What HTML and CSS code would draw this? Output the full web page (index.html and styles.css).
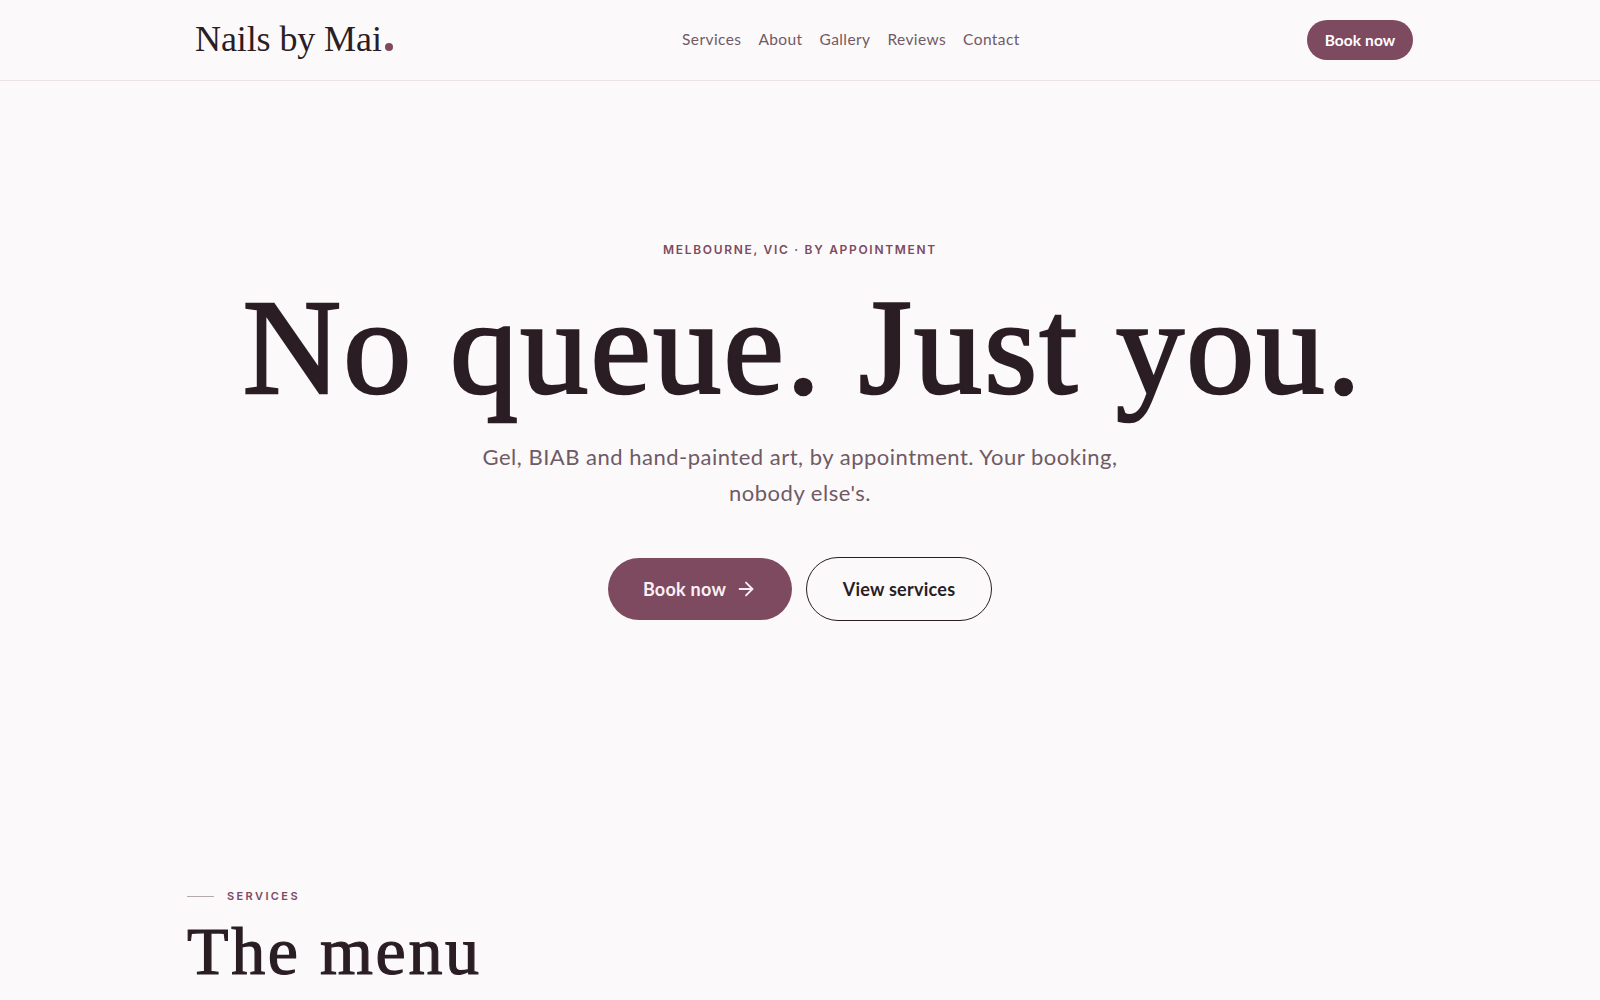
FILE: index.html
```html
<!DOCTYPE html>
<html lang="en">
<head>
<meta charset="utf-8">
<title>Nails by Mai</title>
<link rel="stylesheet" href="styles.css">
</head>
<body>
<header class="site-header">
  <div class="header-inner">
    <a class="logo" href="#">Nails by Mai<span class="logo-dot"></span></a>
    <nav class="nav">
      <a href="#">Services</a>
      <a href="#">About</a>
      <a href="#">Gallery</a>
      <a href="#">Reviews</a>
      <a href="#">Contact</a>
    </nav>
    <a class="btn-small" href="#">Book now</a>
  </div>
</header>
<main>
  <section class="hero">
    <p class="eyebrow">MELBOURNE, VIC · BY APPOINTMENT</p>
    <h1 class="hero-title">No queue. Just you.</h1>
    <p class="hero-sub">Gel, BIAB and hand-painted art, by appointment. Your booking, nobody else's.</p>
    <div class="hero-actions">
      <a class="btn btn-primary" href="#">Book now
        <svg class="arrow" viewBox="0 0 24 24" width="22" height="22" fill="none" stroke="currentColor" stroke-width="2" stroke-linecap="round" stroke-linejoin="round"><path d="M5 12h14"/><path d="m12 5 7 7-7 7"/></svg>
      </a>
      <a class="btn btn-outline" href="#">View services</a>
    </div>
  </section>
  <section class="services">
    <div class="section-label"><span class="rule"></span><span class="label-text">SERVICES</span></div>
    <h2 class="section-title">The menu</h2>
  </section>
</main>
</body>
</html>
```
FILE: styles.css
```css
* { box-sizing: border-box; }
html, body { margin: 0; height: 1000px; overflow: hidden; }
body { background: #fbf9fa; color: #2a1d24; font-family: "Inter", "Liberation Sans", sans-serif; }
a { text-decoration: none; color: inherit; }
.site-header { height: 81px; border-bottom: 1px solid #ebe3e5; }
.header-inner { width: 1226px; height: 80px; margin: 0 auto; display: flex; justify-content: space-between; align-items: center; padding-left: 8px; }
.logo { font-family: "Liberation Serif", serif; font-size: 36px; letter-spacing: -0.1px; display: inline-flex; align-items: baseline; position: relative; top: -1px; }
.logo-dot { width: 8px; height: 8px; border-radius: 50%; background: #7d4a5f; margin-left: 3px; margin-bottom: -3px; }
.nav { display: flex; gap: 17px; font-family: "Lato", sans-serif; font-size: 15.5px; color: #6f5a65; letter-spacing: 0.4px; position: relative; top: -1px; left: 1px; }
.btn-small { height: 40px; width: 106px; border-radius: 20px; background: #7d4a5f; color: #fff; font-family: "Lato", sans-serif; font-size: 15.5px; font-weight: 700; letter-spacing: 0.1px; display: flex; align-items: center; justify-content: center; }
.hero { height: 807px; padding-top: 161px; text-align: center; }
.eyebrow { margin: 0; font-size: 12px; font-weight: 600; letter-spacing: 1.7px; color: #7d4a5f; line-height: 16px; }
.hero-title { margin: 14px 0 0; padding-left: 6px; font-family: "Liberation Serif", serif; font-weight: 400; font-size: 136px; letter-spacing: 2.3px; line-height: 150px; color: #2a1d24; -webkit-text-stroke: 2.6px #2a1d24; }
.hero-sub { width: 660px; margin: 17px auto 0; font-family: "Lato", sans-serif; font-size: 22px; letter-spacing: 0.5px; line-height: 36px; color: #6f5a65; }
.hero-actions { display: flex; justify-content: center; align-items: center; gap: 14px; margin-top: 46px; }
.btn { display: flex; align-items: center; justify-content: center; gap: 9px; border-radius: 32px; font-family: "Lato", sans-serif; font-size: 18px; font-weight: 700; letter-spacing: 0.25px; }
.btn-primary { width: 184px; height: 62px; background: #7d4a5f; color: #fbf0f4; }
.btn-outline { width: 186px; height: 64px; border: 1.5px solid #2a1d24; color: #2a1d24; }
.services { width: 1226px; margin: 0 auto; }
.section-label { display: flex; align-items: center; gap: 13px; height: 16px; }
.rule { width: 27px; height: 1px; background: #b5a7ae; }
.label-text { font-size: 11px; font-weight: 600; letter-spacing: 2.4px; color: #7d4a5f; }
.section-title { margin: 7px 0 0; font-family: "Liberation Serif", serif; font-weight: 400; font-size: 68px; letter-spacing: 2.6px; line-height: 80px; -webkit-text-stroke: 1.2px #2a1d24; }
```
